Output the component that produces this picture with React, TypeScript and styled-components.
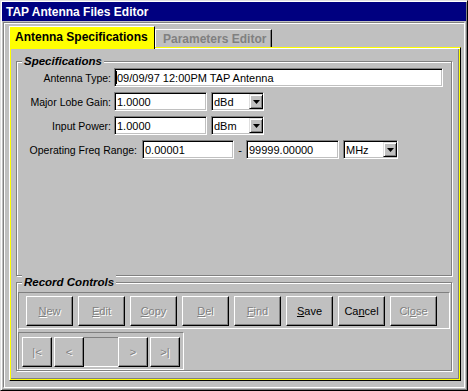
import { FC, ReactNode } from 'react';
import styled, { createGlobalStyle } from 'styled-components';

const GlobalStyle = createGlobalStyle`
  html, body {
    margin: 0;
    padding: 0;
    background: #c0c0c0;
  }
  body {
    font-family: "Liberation Sans", Arial, sans-serif;
  }
  * {
    box-sizing: border-box;
  }
`;

const Window = styled.div`
  width: 468px;
  height: 391px;
  display: flex;
  flex-direction: column;
  padding: 1px;
  background: #c0c0c0;
  border: 1px solid;
  border-color: #dfdfdf #000 #000 #dfdfdf;
  box-shadow: inset 1px 1px 0 #fff, inset -1px -1px 0 #808080;
`;

const TitleBar = styled.div`
  height: 19px;
  display: flex;
  align-items: center;
  padding-left: 4px;
  background: #000080;
  color: #fff;
  font-size: 12px;
  font-weight: bold;
`;

const Client = styled.div`
  flex: 1;
  margin: 1px;
  display: flex;
  flex-direction: column;
  padding: 3px 3px 6px 5px;
  border: 1px solid;
  border-color: #808080 #fff #fff #808080;
  box-shadow: inset 1px 1px 0 #fff;
`;

const TabRow = styled.div`
  height: 21px;
  display: flex;
  align-items: flex-end;
`;

const Tab = styled.div<{ $active?: boolean; $w: number }>`
  position: relative;
  z-index: 1;
  width: ${({ $w }) => $w}px;
  height: ${({ $active }) => ($active ? 23 : 18)}px;
  margin-bottom: ${({ $active }) => ($active ? -2 : 0)}px;
  padding: ${({ $active }) => ($active ? '0 0 2px 5px' : '0 0 0 7px')};
  display: flex;
  align-items: center;
  background: ${({ $active }) => ($active ? '#ffff00' : '#c0c0c0')};
  color: ${({ $active }) => ($active ? '#000' : '#808080')};
  border-top: 1px solid #fff;
  border-left: 1px solid #fff;
  border-right: 1px solid #000;
  box-shadow: ${({ $active }) => ($active ? 'none' : 'inset -1px 0 0 #808080')};
  font-size: 12px;
  font-weight: bold;
  white-space: nowrap;
`;

const Panel = styled.div`
  flex: 1;
  display: flex;
  flex-direction: column;
  gap: 6px;
  padding: 13px 8px 9px 6px;
  border: 1px solid;
  border-color: #ffff00 #000 #000 #fff;
  box-shadow: inset 1px 0 0 #ffff00, inset 0 1px 0 #fff, inset -1px -1px 0 #ffff00,
    inset -2px -2px 0 #808080;
`;

const GroupBox = styled.div<{ $grow?: boolean }>`
  position: relative;
  flex: ${({ $grow }) => ($grow ? 1 : 'none')};
  display: flex;
  flex-direction: column;
  border: 1px solid #808080;
  box-shadow: inset 1px 1px 0 #fff, 1px 1px 0 #fff;
`;

const Legend = styled.span`
  position: absolute;
  top: -8px;
  left: 5px;
  padding: 0 2px;
  background: #c0c0c0;
  font-size: 11.5px;
  font-weight: bold;
  font-style: italic;
  line-height: 14px;
`;

const Fields = styled.div`
  display: flex;
  flex-direction: column;
  gap: 5px;
  padding-top: 6px;
`;

const RecordBody = styled.div`
  display: flex;
  flex-direction: column;
  gap: 3px;
  padding: 9px 1px 0;
`;

const Row = styled.div`
  height: 19px;
  display: flex;
  align-items: center;
`;

const Label = styled.span<{ $w: number; $gap: number }>`
  width: ${({ $w }) => $w}px;
  padding-right: ${({ $gap }) => $gap}px;
  text-align: right;
  font-size: 10.5px;
  white-space: nowrap;
`;

const Field = styled.div<{ $w: number; $ml?: number }>`
  width: ${({ $w }) => $w}px;
  height: 19px;
  margin-left: ${({ $ml }) => $ml ?? 0}px;
  display: flex;
  align-items: center;
  padding-left: 2px;
  background: #fff;
  border: 1px solid;
  border-color: #808080 #fff #fff #808080;
  box-shadow: inset 1px 1px 0 #000, inset -1px -1px 0 #c0c0c0;
  font-size: 11px;
  white-space: nowrap;
  overflow: hidden;
`;

const Caret = styled.span`
  width: 1px;
  height: 13px;
  margin-left: -1px;
  background: #000;
`;

const Dash = styled.span`
  width: 12px;
  text-align: center;
  font-size: 11px;
`;

const DropButton = styled.span`
  width: 14px;
  height: 15px;
  margin-left: auto;
  display: flex;
  align-items: center;
  justify-content: center;
  background: #c0c0c0;
  border: 1px solid;
  border-color: #dfdfdf #000 #000 #dfdfdf;
  box-shadow: inset 1px 1px 0 #fff, inset -1px -1px 0 #808080;
`;

const Bar = styled.div`
  display: flex;
  gap: 5px;
  padding: 3px 7px 2px;
  border: 1px solid;
  border-color: #808080 #fff #fff #808080;
`;

const Nav = styled.div`
  width: 166px;
  display: flex;
  padding: 4px 3px 2px;
  border: 1px solid;
  border-color: #808080 #fff #fff #808080;
`;

const Btn = styled.button<{ $w: number; $off?: boolean; $mr?: number }>`
  width: ${({ $w }) => $w}px;
  height: 30px;
  margin-right: ${({ $mr }) => $mr ?? 0}px;
  padding: 0;
  background: #c0c0c0;
  border: 1px solid;
  border-color: #fff #000 #000 #fff;
  box-shadow: inset -1px -1px 0 #808080;
  font-family: "Liberation Sans", Arial, sans-serif;
  font-size: 11px;
  color: ${({ $off }) => ($off ? '#808080' : '#000')};
  text-shadow: ${({ $off }) => ($off ? '1px 1px 0 #fff' : 'none')};
  white-space: pre;
`;

const Counter = styled.div`
  width: 34px;
  height: 30px;
  background: #c0c0c0;
  border-top: 1px solid #808080;
  border-bottom: 1px solid #fff;
`;

const Combo: FC<{ w: number; ml: number; value: string }> = ({ w, ml, value }) => (
  <Field $w={w} $ml={ml}>
    {value}
    <DropButton>
      <svg width="7" height="4" viewBox="0 0 7 4">
        <polygon points="0,0 7,0 3.5,4" fill="#000" />
      </svg>
    </DropButton>
  </Field>
);

const Key: FC<{ k: string; rest: string; pre?: string }> = ({ pre = '', k, rest }) => (
  <>
    {pre}
    <u>{k}</u>
    {rest}
  </>
);

const records: { pre?: string; k: string; rest: string; off: boolean }[] = [
  { k: 'N', rest: 'ew', off: true },
  { k: 'E', rest: 'dit', off: true },
  { k: 'C', rest: 'opy', off: true },
  { k: 'D', rest: 'el', off: true },
  { k: 'F', rest: 'ind', off: true },
  { k: 'S', rest: 'ave', off: false },
  { pre: 'Ca', k: 'n', rest: 'cel', off: false },
  { pre: 'Cl', k: 'o', rest: 'se', off: true },
];

const LabelRow: FC<{ label: string; w: number; gap: number; children: ReactNode }> = ({
  label,
  w,
  gap,
  children,
}) => (
  <Row>
    <Label $w={w} $gap={gap}>
      {label}
    </Label>
    {children}
  </Row>
);

export default function App() {
  return (
    <>
      <GlobalStyle />
      <Window>
        <TitleBar>TAP Antenna Files Editor</TitleBar>
        <Client>
          <TabRow>
            <Tab $active $w={146}>
              Antenna Specifications
            </Tab>
            <Tab $w={117}>Parameters Editor</Tab>
          </TabRow>
          <Panel>
            <GroupBox $grow>
              <Legend>Specifications</Legend>
              <Fields>
                <LabelRow label="Antenna Type:" w={97} gap={3}>
                  <Field $w={329}>
                    <Caret />
                    09/09/97 12:00PM TAP Antenna
                  </Field>
                </LabelRow>
                <LabelRow label="Major Lobe Gain:" w={97} gap={3}>
                  <Field $w={93}>1.0000</Field>
                  <Combo w={53} ml={4} value="dBd" />
                </LabelRow>
                <LabelRow label="Input Power:" w={97} gap={3}>
                  <Field $w={93}>1.0000</Field>
                  <Combo w={53} ml={4} value="dBm" />
                </LabelRow>
                <LabelRow label="Operating Freq Range:" w={125} gap={5}>
                  <Field $w={92}>0.00001</Field>
                  <Dash>-</Dash>
                  <Field $w={93}>99999.00000</Field>
                  <Combo w={55} ml={4} value="MHz" />
                </LabelRow>
              </Fields>
            </GroupBox>
            <GroupBox>
              <Legend>Record Controls</Legend>
              <RecordBody>
                <Bar>
                  {records.map((r) => (
                    <Btn key={r.k + r.rest} $w={47} $off={r.off}>
                      <Key pre={r.pre} k={r.k} rest={r.rest} />
                    </Btn>
                  ))}
                </Bar>
                <Nav>
                  <Btn $w={30} $off $mr={2}>
                    {'|<'}
                  </Btn>
                  <Btn $w={30} $off>
                    {'<'}
                  </Btn>
                  <Counter />
                  <Btn $w={30} $off $mr={2}>
                    {'>'}
                  </Btn>
                  <Btn $w={30} $off>
                    {'>|'}
                  </Btn>
                </Nav>
              </RecordBody>
            </GroupBox>
          </Panel>
        </Client>
      </Window>
    </>
  );
}
